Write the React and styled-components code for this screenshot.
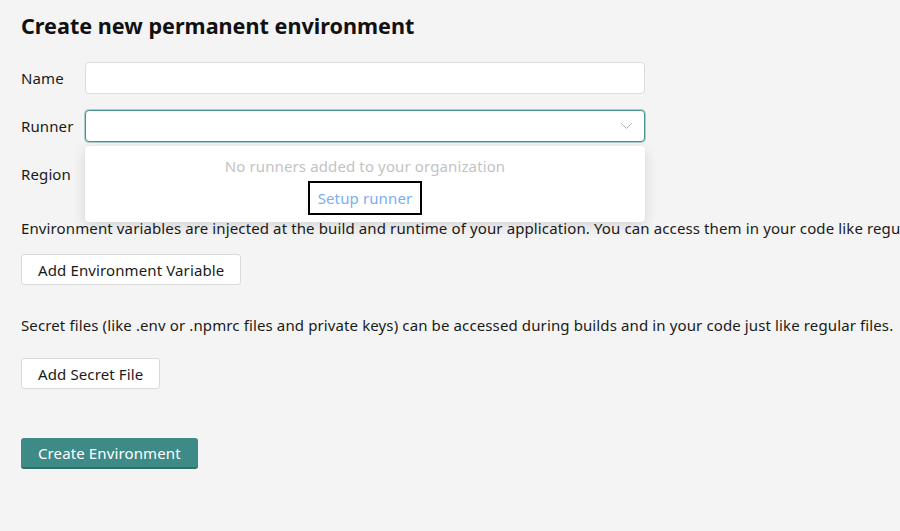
import React from "react";
import styled, { createGlobalStyle } from "styled-components";

const GlobalStyle = createGlobalStyle`
  html, body {
    margin: 0;
    padding: 0;
    background: #f4f4f4;
    font-family: "Noto Sans", "Liberation Sans", sans-serif;
    color: #1a1a1a;
    overflow: hidden;
  }
`;

const Page = styled.div`
  padding: 12px 21px 0 21px;
  width: 900px;
  box-sizing: border-box;
  letter-spacing: 0.12px;
`;

const Title = styled.h1`
  font-size: 21.6px;
  font-weight: 700;
  margin: 0 0 22px 0;
  line-height: 28px;
  letter-spacing: 0;
  color: #111;
`;

const Form = styled.div`
  display: flex;
  flex-direction: column;
  gap: 16px;
  width: 624px;
`;

const Row = styled.div`
  display: grid;
  grid-template-columns: 64px 1fr;
  align-items: center;
`;

const Label = styled.label`
  font-size: 15px;
  color: #1a1a1a;
`;

const Field = styled.div`
  position: relative;
`;

const Input = styled.div`
  height: 32px;
  box-sizing: border-box;
  background: #fff;
  border: 1px solid ${(p) => (p.focused ? "#4a938f" : "#dcdcdc")};
  box-shadow: ${(p) => (p.focused ? "0 0 0 1px #a9cfcc" : "none")};
  border-radius: 4px;
  display: flex;
  align-items: center;
  justify-content: flex-end;
  padding-right: 11px;
`;

const Menu = styled.div`
  position: absolute;
  top: 36px;
  left: 0;
  right: 0;
  height: 76px;
  background: #fff;
  border-radius: 4px;
  box-shadow: 0 4px 14px rgba(0, 0, 0, 0.12), 0 0 2px rgba(0, 0, 0, 0.06);
  display: flex;
  flex-direction: column;
  align-items: center;
  padding-top: 10px;
  box-sizing: border-box;
  z-index: 2;
`;

const Empty = styled.div`
  font-size: 15px;
  color: #c3c3c3;
  line-height: 20px;
`;

const SetupLink = styled.a`
  margin-top: 5px;
  font-size: 15px;
  color: #79aef2;
  border: 2.5px solid #000;
  padding: 5px 8px;
  line-height: 20px;
  text-decoration: none;
`;

const Text = styled.p`
  font-size: 15px;
  margin: 0;
  white-space: nowrap;
  line-height: 20px;
  color: #1a1a1a;
`;

const Section = styled.div`
  display: flex;
  flex-direction: column;
  align-items: flex-start;
  gap: ${(p) => p.gap}px;
  margin-top: ${(p) => p.top}px;
`;

const Button = styled.button`
  font-family: inherit;
  letter-spacing: inherit;
  font-size: 15px;
  height: 31px;
  padding: 0 16px;
  border-radius: 3px;
  background: #fff;
  border: 1px solid #dadada;
  color: #1a1a1a;
  cursor: pointer;
`;

const PrimaryButton = styled(Button)`
  background: #3d8a87;
  border: none;
  border-bottom: 2px solid #2f6d6b;
  color: #fff;
  padding: 0 17px;
`;

const Chevron = () => (
  <svg width="13" height="8" viewBox="0 0 13 8" fill="none">
    <path d="M1 1l5.5 5.5L12 1" stroke="#b8b8b8" strokeWidth="1" />
  </svg>
);

export default function App() {
  return (
    <>
      <GlobalStyle />
      <Page>
        <Title>Create new permanent environment</Title>
        <Form>
          <Row>
            <Label>Name</Label>
            <Input />
          </Row>
          <Row>
            <Label>Runner</Label>
            <Field>
              <Input focused>
                <Chevron />
              </Input>
              <Menu>
                <Empty>No runners added to your organization</Empty>
                <SetupLink>Setup runner</SetupLink>
              </Menu>
            </Field>
          </Row>
          <Row>
            <Label>Region</Label>
            <Input />
          </Row>
        </Form>
        <Section top={28} gap={16}>
          <Text>
            Environment variables are injected at the build and runtime of your
            application. You can access them in your code like regular
            environment variables.
          </Text>
          <Button>Add Environment Variable</Button>
        </Section>
        <Section top={30} gap={23}>
          <Text>
            Secret files (like .env or .npmrc files and private keys) can be
            accessed during builds and in your code just like regular files.
          </Text>
          <Button>Add Secret File</Button>
        </Section>
        <Section top={49} gap={0}>
          <PrimaryButton>Create Environment</PrimaryButton>
        </Section>
      </Page>
    </>
  );
}
